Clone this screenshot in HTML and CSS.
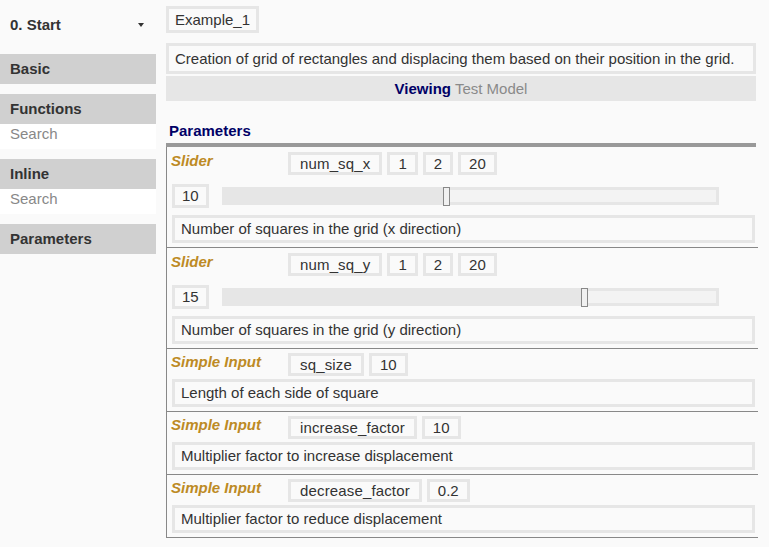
FILE: index.html
```html
<!DOCTYPE html>
<html>
<head>
<meta charset="utf-8">
<link rel="stylesheet" href="styles.css">
</head>
<body>
<div class="app">
  <aside class="sidebar">
    <div class="start"><span>0. Start</span><span class="caret"></span></div>
    <div class="group"><div class="bar">Basic</div></div>
    <div class="group"><div class="bar">Functions</div><div class="search">Search</div></div>
    <div class="group"><div class="bar">Inline</div><div class="search">Search</div></div>
    <div class="group"><div class="bar">Parameters</div></div>
  </aside>
  <main class="main">
    <div><span class="title-box">Example_1</span></div>
    <div class="desc-main">Creation of grid of rectangles and displacing them based on their position in the grid.</div>
    <div class="viewing"><b>Viewing</b> <span>Test Model</span></div>
    <div class="params-head">Parameters</div>
    <div class="params-rule"></div>

    <div class="block slider">
      <div class="row">
        <span class="kind">Slider</span>
        <span class="box name">num_sq_x</span>
        <span class="box num">1</span>
        <span class="box num">2</span>
        <span class="box num">20</span>
      </div>
      <div class="slider-row">
        <span class="box val">10</span>
        <div class="track">
          <div class="fill" style="width:45%"></div>
          <div class="thumb" style="left:44.4%"></div>
        </div>
      </div>
      <div class="desc">Number of squares in the grid (x direction)</div>
    </div>

    <div class="block slider">
      <div class="row">
        <span class="kind">Slider</span>
        <span class="box name">num_sq_y</span>
        <span class="box num">1</span>
        <span class="box num">2</span>
        <span class="box num">20</span>
      </div>
      <div class="slider-row">
        <span class="box val">15</span>
        <div class="track">
          <div class="fill" style="width:73%"></div>
          <div class="thumb" style="left:72.6%"></div>
        </div>
      </div>
      <div class="desc">Number of squares in the grid (y direction)</div>
    </div>

    <div class="block simple">
      <div class="row">
        <span class="kind">Simple Input</span>
        <span class="box name">sq_size</span>
        <span class="box num">10</span>
      </div>
      <div class="desc">Length of each side of square</div>
    </div>

    <div class="block simple">
      <div class="row">
        <span class="kind">Simple Input</span>
        <span class="box name">increase_factor</span>
        <span class="box num">10</span>
      </div>
      <div class="desc">Multiplier factor to increase displacement</div>
    </div>

    <div class="block simple">
      <div class="row">
        <span class="kind">Simple Input</span>
        <span class="box name">decrease_factor</span>
        <span class="box num">0.2</span>
      </div>
      <div class="desc">Multiplier factor to reduce displacement</div>
    </div>
  </main>
</div>
</body>
</html>
```
FILE: styles.css
```css
* { box-sizing: border-box; }
body {
  margin: 0;
  background: #fafafa;
  font-family: "Liberation Sans", Arial, sans-serif;
  font-size: 15px;
  color: #333;
}
.app {
  display: flex;
  gap: 10px;
  align-items: flex-start;
}
.sidebar {
  width: 156px;
  flex: none;
  display: flex;
  flex-direction: column;
  gap: 10px;
}
.start {
  height: 44px;
  padding: 4px 12px 0 10px;
  display: flex;
  align-items: center;
  justify-content: space-between;
  font-weight: bold;
  color: #333;
}
.caret {
  width: 0;
  height: 0;
  border-left: 3.5px solid transparent;
  border-right: 3.5px solid transparent;
  border-top: 4px solid #333;
  margin-top: 1px;
}
.bar {
  height: 30px;
  line-height: 30px;
  padding-left: 10px;
  background: #d0d0d0;
  font-weight: bold;
  color: #333;
}
.search {
  height: 25px;
  line-height: 20px;
  padding-left: 10px;
  background: #fff;
  color: #888;
}
.main {
  width: 590px;
  flex: none;
  padding-top: 6px;
}
.title-box {
  display: inline-block;
  border: 3px solid #e6e6e6;
  padding: 0 6px;
  line-height: 21px;
}
.desc-main {
  margin-top: 10px;
  border: 3px solid #e6e6e6;
  padding: 0 6px;
  line-height: 25px;
}
.viewing {
  margin-top: 2px;
  height: 25px;
  line-height: 25px;
  background: #e6e6e6;
  text-align: center;
}
.viewing b { color: #000066; }
.viewing span { color: #8a8a8a; }
.params-head {
  margin-top: 20px;
  line-height: 20px;
  padding-left: 3px;
  font-weight: bold;
  color: #000066;
}
.params-rule {
  margin-top: 2px;
  height: 4px;
  background: #999;
}
.block {
  margin-right: -2px;
  border-left: 1px solid #888;
  border-bottom: 1px solid #888;
  padding: 4px 3px 4px 5px;
}
.slider:first-of-type { margin-top: 1px; }
.slider { padding-top: 5px; }
.row {
  display: flex;
  align-items: flex-start;
  gap: 5px;
}
.kind {
  width: 112px;
  margin-left: -1px;
  line-height: 17px;
  font-weight: bold;
  font-style: italic;
  color: #bd8a25;
}
.box {
  display: inline-block;
  border: 3px solid #e6e6e6;
  line-height: 17px;
}
.name {
  padding: 0 9px;
  letter-spacing: 0.15px;
}
.num { padding: 0 8px; }
.val {
  padding: 0 7px;
  line-height: 18px;
}
.slider-row {
  margin-top: 9px;
  display: flex;
  align-items: center;
  gap: 13px;
}
.track {
  position: relative;
  width: 497px;
  height: 18px;
  border: 3px solid #e6e6e6;
  background: #f3f3f3;
}
.fill {
  height: 100%;
  background: #e6e6e6;
}
.thumb {
  position: absolute;
  top: -3px;
  width: 7px;
  height: 19px;
  border: 1px solid #888;
  background: #f0f0f0;
}
.desc {
  margin-top: 7px;
  border: 3px solid #e6e6e6;
  padding: 0 6px;
  line-height: 22px;
}
.simple .desc { margin-top: 3px; }
```
